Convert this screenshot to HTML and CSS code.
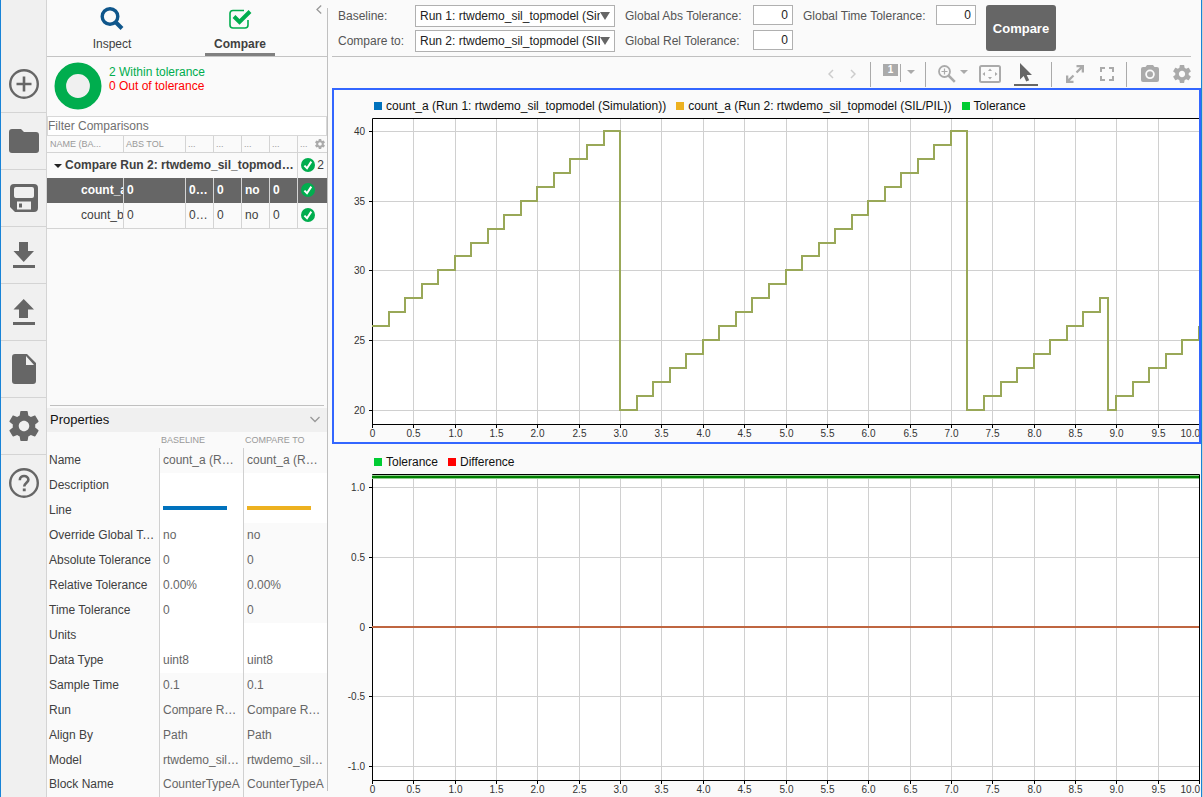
FILE: index.html
```html
<!DOCTYPE html>
<html lang="en">
<head>
  <meta charset="UTF-8" />
  <meta name="viewport" content="width=device-width, initial-scale=1.0"/>
  <title>Simulation Data Inspector</title>
  <link rel="stylesheet" href="styles.css">
</head>
<body>

  <svg class="defs" width="0" height="0" aria-hidden="true">
    <symbol id="gear" viewBox="2 2 20 20">
      <path d="M19.43 12.98c.04-.32.07-.64.07-.98s-.03-.66-.07-.98l2.11-1.65c.19-.15.24-.42.12-.64l-2-3.46c-.12-.22-.39-.3-.61-.22l-2.49 1c-.52-.4-1.08-.73-1.69-.98l-.38-2.65C14.46 2.18 14.25 2 14 2h-4c-.25 0-.46.18-.49.42l-.38 2.65c-.61.25-1.17.59-1.69.98l-2.49-1c-.23-.09-.49 0-.61.22l-2 3.46c-.13.22-.07.49.12.64l2.11 1.65c-.04.32-.07.65-.07.98s.03.66.07.98l-2.11 1.65c-.19.15-.24.42-.12.64l2 3.46c.12.22.39.3.61.22l2.49-1c.52.4 1.08.73 1.69.98l.38 2.65c.03.24.24.42.49.42h4c.25 0 .46-.18.49-.42l.38-2.65c.61-.25 1.17-.59 1.69-.98l2.49 1c.23.09.49 0 .61-.22l2-3.46c.12-.22.07-.49-.12-.64l-2.11-1.65zM12 15.5c-1.93 0-3.5-1.57-3.5-3.5s1.57-3.5 3.5-3.5 3.5 1.57 3.5 3.5-1.57 3.5-3.5 3.5z"/>
    </symbol>
    <symbol id="pass" viewBox="0 0 14 14">
      <circle cx="7" cy="7" r="7" fill="#00ad4e"/>
      <path d="M3.4 7.6 6 10.2 10.3 3.6" fill="none" stroke="#fff" stroke-width="2"/>
    </symbol>
  </svg>

  <div class="app">

    <nav class="sidebar">
      <button aria-label="New"><svg width="30" height="30" viewBox="0 0 30 30"><circle cx="15" cy="15" r="13.8" fill="none" stroke="#666" stroke-width="2.4"/><path d="M15 7.5v15M7.5 15h15" stroke="#666" stroke-width="2.6"/></svg></button>
      <button aria-label="Open"><svg width="30" height="24" viewBox="0 0 30 24"><path d="M3 0h9l3 3h12a3 3 0 0 1 3 3v15a3 3 0 0 1-3 3H3a3 3 0 0 1-3-3V3a3 3 0 0 1 3-3z"/></svg></button>
      <button aria-label="Save"><svg width="28" height="28" viewBox="0 0 28 28"><path fill-rule="evenodd" d="M4 0h20a4 4 0 0 1 4 4v20a4 4 0 0 1-4 4H5l-5-5V4a4 4 0 0 1 4-4zM6 3a2 2 0 0 0-2 2v7a2 2 0 0 0 2 2h16a2 2 0 0 0 2-2V5a2 2 0 0 0-2-2zM7 17.500v8h14v-8zM9 19.500h3v4H9z"/></svg></button>
      <button aria-label="Import"><svg width="22" height="26" viewBox="0 0 22 26"><path d="M6 0h9v9h6L10.700 20 .500 9H6zM0 23h22v3H0z"/></svg></button>
      <button aria-label="Export"><svg width="22" height="26" viewBox="0 0 22 26"><path d="M10.700 0 21 10.500h-6V19H6v-8.500H.500zM0 23h22v3H0z"/></svg></button>
      <button aria-label="Report"><svg width="24" height="30" viewBox="0 0 24 30"><path fill-rule="evenodd" d="M3 0h12l9 9v18a3 3 0 0 1-3 3H3a3 3 0 0 1-3-3V3a3 3 0 0 1 3-3zM14 2v9h8z"/></svg></button>
      <button aria-label="Preferences"><svg width="30" height="30"><use href="#gear"/></svg></button>
      <button aria-label="Help"><svg width="30" height="30" viewBox="0 0 30 30"><circle cx="15" cy="15" r="13.8" fill="none" stroke="#666" stroke-width="2.4"/><path d="M10.800 12.200c0-5.600 8.600-5.300 8.600-.5 0 2.800-4.200 3.300-4.200 6.800" fill="none" stroke="#666" stroke-width="2.6"/><path d="M13.800 20.400h2.900v2.800h-2.900z"/></svg></button>
    </nav>

    <section class="panel">
      <div class="tabs">
        <button class="tab">
          <svg width="24" height="24" viewBox="0 0 24 24"><circle cx="10" cy="9.500" r="7.800" fill="none" stroke="#0f568b" stroke-width="3.400"/><path d="M15.500 15 22 21.500" stroke="#0f568b" stroke-width="4"/></svg>
          Inspect
        </button>
        <button class="tab active">
          <svg width="24" height="24" viewBox="0 0 24 24"><path d="M16 3.500H5a3 3 0 0 0-3 3V18a3 3 0 0 0 3 3h12a3 3 0 0 0 3-3v-5" fill="none" stroke="#00ad4e" stroke-width="1.600"/><path d="M6 9.500 11.500 15 22 4.500" fill="none" stroke="#00ad4e" stroke-width="4"/></svg>
          Compare
        </button>
        <button class="collapse" aria-label="Collapse"><svg width="6" height="9" viewBox="0 0 6 9"><path d="M5.200.500 1 4.500l4.200 4" fill="none" stroke="#999" stroke-width="1.300"/></svg></button>
      </div>

      <div class="summary">
        <svg width="48" height="48" viewBox="0 0 48 48"><circle cx="24" cy="24" r="17.700" fill="#f0f0f0" stroke="#00ad4e" stroke-width="11.600"/></svg>
        <div>
          <div class="within">2 Within tolerance</div>
          <div class="out">0 Out of tolerance</div>
        </div>
      </div>

      <input class="filter" type="text" placeholder="Filter Comparisons" aria-label="Filter Comparisons" />

      <div class="results">
        <table class="comparisons">
          <colgroup><col class="c-name"><col class="c-abs"><col class="c-s"><col class="c-s"><col class="c-s"><col class="c-s"><col></colgroup>
          <tr class="head">
            <th>NAME (BA...</th><th>ABS TOL</th><th>...</th><th>...</th><th>...</th><th>...</th>
            <th class="last"><div class="split">...<svg width="10" height="10" fill="#aaa"><use href="#gear"/></svg></div></th>
          </tr>
          <tr class="group">
            <td colspan="6"><div class="group-name"><i class="arrow"></i><span>Compare Run 2: rtwdemo_sil_topmodel (SIL/PIL)</span></div></td>
            <td class="last"><div class="split"><svg width="14" height="14"><use href="#pass"/></svg>2</div></td>
          </tr>
          <tr class="selected">
            <td class="signal">count_a</td><td>0</td><td>0…</td><td>0</td><td>no</td><td>0</td>
            <td class="last"><svg width="14" height="14"><use href="#pass"/></svg></td>
          </tr>
          <tr class="bottom">
            <td class="signal">count_b</td><td>0</td><td>0…</td><td>0</td><td>no</td><td>0</td>
            <td class="last"><svg width="14" height="14"><use href="#pass"/></svg></td>
          </tr>
        </table>
      </div>

      <div class="properties">
        <div class="prop-title">Properties<svg width="10" height="7" viewBox="0 0 10 7"><path d="M.500 1 5 5.500 9.500 1" fill="none" stroke="#999" stroke-width="1.300"/></svg></div>
        <table class="props">
          <colgroup><col class="p-name"><col class="p-base"><col></colgroup>
          <tr><th></th><th>BASELINE</th><th>COMPARE TO</th></tr>
          <tr><td>Name</td><td>count_a (Run 1: rtwdemo_sil_topmodel)</td><td>count_a (Run 2: rtwdemo_sil_topmodel)</td></tr>
          <tr><td>Description</td><td class="edit"></td><td class="edit"></td></tr>
          <tr><td>Line</td><td class="edit"><span class="line blue"></span></td><td class="edit"><span class="line yellow"></span></td></tr>
          <tr><td>Override Global Tolerance</td><td class="edit">no</td><td>no</td></tr>
          <tr><td>Absolute Tolerance</td><td class="edit">0</td><td>0</td></tr>
          <tr><td>Relative Tolerance</td><td class="edit">0.00%</td><td>0.00%</td></tr>
          <tr><td>Time Tolerance</td><td class="edit">0</td><td>0</td></tr>
          <tr><td>Units</td><td class="edit"></td><td class="edit"></td></tr>
          <tr><td>Data Type</td><td class="edit">uint8</td><td class="edit">uint8</td></tr>
          <tr><td>Sample Time</td><td>0.1</td><td>0.1</td></tr>
          <tr><td>Run</td><td>Compare Run 1</td><td>Compare Run 2</td></tr>
          <tr><td>Align By</td><td>Path</td><td>Path</td></tr>
          <tr><td>Model</td><td>rtwdemo_sil_topmodel</td><td>rtwdemo_sil_topmodel</td></tr>
          <tr><td>Block Name</td><td>CounterTypeA</td><td>CounterTypeA</td></tr>
        </table>
      </div>
    </section>

    <div class="divider"></div>

    <main class="main">
      <form class="settings" onsubmit="return false">
        <label for="baseline">Baseline:</label>
        <div class="select"><select id="baseline"><option>Run 1: rtwdemo_sil_topmodel (Simulation)</option></select></div>
        <label for="absTol">Global Abs Tolerance:</label>
        <input id="absTol" type="text" value="0" />
        <label for="timeTol">Global Time Tolerance:</label>
        <input id="timeTol" type="text" value="0" />
        <button class="compare">Compare</button>
        <label for="compareTo">Compare to:</label>
        <div class="select"><select id="compareTo"><option>Run 2: rtwdemo_sil_topmodel (SIL/PIL)</option></select></div>
        <label for="relTol">Global Rel Tolerance:</label>
        <input id="relTol" type="text" value="0" />
      </form>

      <div class="toolbar">
        <div class="nav">
          <button aria-label="Previous"><svg width="6" height="10" viewBox="0 0 6 10"><path d="M5 1 1 5l4 4" fill="none" stroke="#ccc" stroke-width="1.500"/></svg></button>
          <button aria-label="Next"><svg width="6" height="10" viewBox="0 0 6 10"><path d="m1 1 4 4-4 4" fill="none" stroke="#ccc" stroke-width="1.500"/></svg></button>
        </div>
        <i class="sep"></i>
        <button class="layout" aria-label="Layout"><span class="pages">1</span><i class="bar"></i><i class="caret"></i></button>
        <i class="sep"></i>
        <div class="tools">
          <button class="zoom" aria-label="Zoom"><svg width="18" height="18" viewBox="0 0 18 18"><circle cx="6.500" cy="6.500" r="5.500" fill="none" stroke="#aaa" stroke-width="1.800"/><path d="M6.500 3.500v6M3.500 6.500h6" stroke="#aaa" stroke-width="1.200"/><path d="m10.500 10.500 6.300 6.300" stroke="#aaa" stroke-width="2.500"/></svg><i class="caret"></i></button>
          <button class="tool" aria-label="Fit to view"><svg width="22" height="18" viewBox="0 0 22 18"><rect x="1" y="1" width="20" height="16" rx="1.500" fill="none" stroke="#aaa" stroke-width="2"/><path d="M11 3.500 13 6H9zM11 14.500 9 12h4zM3.500 9 6 7v4zM18.500 9 16 11V7z"/></svg></button>
          <button class="tool current" aria-label="Select"><svg width="14" height="19" viewBox="0 0 14 19"><path fill="#666" d="M1 0v16.500l3.700-3.500 2.500 5.500 3-1.300L7.700 12H13z"/></svg></button>
        </div>
        <i class="sep"></i>
        <button aria-label="Expand"><svg width="18" height="18" viewBox="0 0 18 18"><path d="M10.500 0H18v7.500h-2.300V3.900l-4.400 4.400-1.600-1.600 4.400-4.400h-3.600zM0 10.500h2.300v3.600l4.400-4.400 1.600 1.600-4.400 4.400h3.600V18H0z"/></svg></button>
        <button aria-label="Full screen"><svg width="14" height="14" viewBox="0 0 14 14"><path d="M0 5V0h5v2H2v3zM9 0h5v5h-2V2H9zM0 9h2v3h3v2H0zM12 9h2v5H9v-2h3z"/></svg></button>
        <i class="sep"></i>
        <button aria-label="Snapshot"><svg width="18" height="17" viewBox="0 0 18 17"><path fill-rule="evenodd" d="M6 0h6l1.500 2H16a2 2 0 0 1 2 2v11a2 2 0 0 1-2 2H2a2 2 0 0 1-2-2V4a2 2 0 0 1 2-2h2.500zM9 4.500a4.800 4.800 0 1 0 0 9.600 4.800 4.800 0 1 0 0-9.600z"/><circle cx="9" cy="9.300" r="3"/></svg></button>
        <button aria-label="Plot settings"><svg width="18" height="18"><use href="#gear"/></svg></button>
      </div>

      <div class="plots">
        <div class="plot focused">
          <div class="legend">
            <span><i class="blue"></i>count_a (Run 1: rtwdemo_sil_topmodel (Simulation))</span>
            <span><i class="yellow"></i>count_a (Run 2: rtwdemo_sil_topmodel (SIL/PIL))</span>
            <span><i class="green"></i>Tolerance</span>
          </div>
          <svg id="signals" class="chart"></svg>
        </div>
        <div class="plot">
          <div class="legend">
            <span><i class="green"></i>Tolerance</span>
            <span><i class="red"></i>Difference</span>
          </div>
          <svg id="difference" class="chart"></svg>
        </div>
      </div>
    </main>
  </div>

  <script src="script.js"></script>
</body>
</html>
```
FILE: styles.css
```css
* { box-sizing: border-box; }

body {
  margin: 0;
  height: 100vh;
  padding-right: 1px;
  background: #d0d0d0;
  font-family: "Liberation Sans", Arial, sans-serif;
  font-size: 12px;
  color: #404040;
  overflow: hidden;
}

.defs { position: absolute; }

button, input, select {
  font-family: inherit;
  font-size: 12px;
  color: inherit;
}

button {
  border: none;
  padding: 0;
  background: none;
  cursor: pointer;
}

svg { display: block; flex: none; }

.app {
  display: flex;
  height: 100%;
  background: #fafafa;
  border-left: 1px solid #1883d7;
  border-right: 1px solid #1883d7;
}

/* left icon strip */
.sidebar {
  display: flex;
  flex-direction: column;
  flex: none;
  width: 46px;
  padding-top: 56px;
  background: #f0f0f0;
  border-right: 1px solid #d4d4d4;
  fill: #666;
}

.sidebar button {
  display: flex;
  align-items: center;
  justify-content: center;
  height: 57px;
  padding-bottom: 1px;
  border-bottom: 1px solid #d4d4d4;
}

.sidebar button:last-child { border-bottom-color: transparent; }

/* comparison panel */
.panel {
  display: flex;
  flex-direction: column;
  flex: none;
  width: 280px;
}

.tabs {
  display: flex;
  flex: none;
  height: 57px;
  padding-left: 1px;
  border-bottom: 1px solid #c4c4c4;
}

.tab {
  display: flex;
  flex-direction: column;
  align-items: center;
  gap: 6px;
  width: 70px;
  margin: 0 29px;
  padding-top: 7px;
}

.tab.active {
  font-weight: bold;
  border-bottom: 3px solid #808080;
}

.collapse {
  align-self: flex-start;
  margin-left: auto;
  padding: 5px 5px 5px 0;
}

.summary {
  display: flex;
  flex: none;
  gap: 7px;
  height: 59px;
  padding: 5px 7px;
  line-height: 14px;
}

.summary > div { padding-top: 3px; }
.within { color: #00ad4e; }
.out { color: #f00; }

.filter {
  flex: none;
  width: 100%;
  height: 20px;
  padding: 0;
  border: 1px solid #d8d8d8;
  background: #fff;
}

.filter::placeholder { color: #707070; }

.results { flex: 1; overflow: hidden; }

table {
  width: 100%;
  table-layout: fixed;
  border-collapse: separate;
  border-spacing: 0;
}

th {
  font-size: 9px;
  font-weight: normal;
  text-align: left;
  color: #999;
}

th, td {
  padding: 0 3px;
  white-space: nowrap;
  overflow: hidden;
}

td { padding-bottom: 2px; }

.c-name { width: 77px; }
.c-abs { width: 62px; }
.c-s { width: 28px; }

.comparisons th, .comparisons td { border-right: 1px solid #d4d4d4; }
.comparisons .last { border-right: none; }
.comparisons th { height: 17px; padding: 0 2px; border-bottom: 1px solid #d4d4d4; }
.comparisons th:first-child { padding-left: 3px; }
.comparisons td { height: 25px; }
.comparisons .bottom td { height: 26px; border-bottom: 1px solid #d4d4d4; }
.comparisons .signal { padding-left: 34px; padding-right: 0; }

.group { font-weight: bold; }
.group .last { font-weight: normal; }

.group-name {
  display: flex;
  align-items: center;
  gap: 3px;
  padding-left: 4px;
}

.group-name span {
  overflow: hidden;
  text-overflow: ellipsis;
}

.arrow {
  flex: none;
  margin-top: 2px;
  border: 4px solid transparent;
  border-top-color: #222;
  border-bottom: none;
}

.split {
  display: flex;
  align-items: center;
  justify-content: space-between;
}

.selected {
  background: #666;
  color: #fff;
  font-weight: bold;
}

/* property table */
.properties { flex: none; }

.properties::before {
  content: "";
  display: block;
  height: 1px;
  margin: 0 3px 2px 3px;
  background: #c0c0c0;
}

.prop-title {
  display: flex;
  align-items: center;
  justify-content: space-between;
  height: 24px;
  padding: 0 7px 2px 3px;
  background: #f0f0f0;
  color: #111;
  font-size: 13px;
}

.p-name { width: 112px; }
.p-base { width: 84px; }

.props th { height: 16px; padding: 0 2px; }

.props td {
  height: 25px;
  color: #666;
  border-left: 1px solid #d0d0d0;
  text-overflow: ellipsis;
}

.props td:first-child {
  padding-left: 2px;
  color: #404040;
  border-left: none;
}

.props tr:last-child td { height: 24px; }
.props .edit { background: #fff; }

.line {
  display: block;
  width: 64px;
  height: 4px;
  margin-bottom: 4px;
}

.blue { background: #0072bd; }
.yellow { background: #edb120; }
.green { background: #00cc33; }
.red { background: #f00; }

.divider {
  flex: none;
  width: 1px;
  margin: 8px 4px 6px 0;
  background: #c0c0c0;
}

/* right side */
.main {
  display: flex;
  flex-direction: column;
  flex: 1;
  min-width: 0;
}

.settings {
  display: grid;
  grid-template-columns: 77px 200px 10px 128px 40px 10px 133px 40px 10px 70px;
  grid-template-rows: 22px 22px;
  row-gap: 3px;
  height: 57px;
  margin-right: 10px;
  padding: 5px 0 0 6px;
  border-bottom: 1px solid #c0c0c0;
  color: #555;
}

.settings label { line-height: 22px; white-space: nowrap; }
.settings label[for="baseline"] { grid-area: 1 / 1; }
.settings label[for="compareTo"] { grid-area: 2 / 1; }
.settings label[for="absTol"] { grid-area: 1 / 4; }
.settings label[for="relTol"] { grid-area: 2 / 4; }
.settings label[for="timeTol"] { grid-area: 1 / 7; }
#absTol { grid-area: 1 / 5; }
#relTol { grid-area: 2 / 5; }
#timeTol { grid-area: 1 / 8; }

.settings input {
  width: 40px;
  height: 20px;
  padding: 0 4px;
  border: 1px solid #b0b0b0;
  background: #fff;
  color: #222;
  text-align: right;
}

.select {
  position: relative;
  grid-column: 2;
}

.select select {
  width: 100%;
  height: 22px;
  padding: 0 14px 0 4px;
  appearance: none;
  border: 1px solid #b0b0b0;
  border-radius: 0;
  background: #fff;
  color: #222;
}

.select::after {
  content: "";
  position: absolute;
  top: 7px;
  right: 5px;
  border: 5px solid transparent;
  border-top: 8px solid #666;
  border-bottom: none;
  pointer-events: none;
}

.compare {
  grid-area: 1 / 10 / 3 / 11;
  height: 46px;
  border-radius: 3px;
  background: #666;
  color: #fff;
  font-size: 13px;
  font-weight: bold;
}

.toolbar {
  display: flex;
  flex: none;
  justify-content: flex-end;
  height: 31px;
  padding-right: 3px;
  fill: #aaa;
}

.toolbar button {
  display: flex;
  align-items: center;
  justify-content: center;
  width: 32px;
  height: 31px;
  padding-top: 2px;
}

.sep {
  width: 1px;
  height: 25px;
  margin: 5px 7px 0 3px;
  background: #aaa;
}

.nav { display: flex; padding-right: 3px; }
.toolbar .nav button { width: 22px; }

.toolbar .layout {
  align-items: flex-start;
  justify-content: flex-start;
  gap: 2px;
  width: 34px;
  margin: 0 6px 0 4px;
  padding: 7px 0 0 1px;
}

.pages {
  width: 15px;
  height: 12px;
  background: #aaa;
  color: #fff;
  font-size: 10px;
  font-weight: bold;
  line-height: 12px;
}

.bar {
  width: 1px;
  height: 18px;
  background: #aaa;
}

.caret {
  border: 4px solid transparent;
  border-top-color: #aaa;
  border-bottom: none;
}

.layout .caret { margin: 6px 0 0 4px; }

.tools {
  display: flex;
  gap: 10px;
  padding: 0 10px 0 5px;
}

.toolbar .zoom { width: 30px; gap: 4px; }
.zoom .caret { margin-bottom: 3px; }
.toolbar .tool { width: 24px; }

.toolbar .current {
  height: 29px;
  margin-left: 2px;
  padding-top: 4px;
  border-bottom: 2px solid #666;
}

/* lower time axis runs off the bottom of the window */
.plots {
  display: grid;
  grid-template-rows: 1fr 1fr;
  flex: 1;
  margin-bottom: -3px;
  min-height: 0;
}

.plot {
  display: flex;
  flex-direction: column;
  min-height: 0;
  border: 2px solid transparent;
}

.focused {
  border-color: #3366ff;
  overflow: hidden;
}

.legend {
  display: flex;
  flex: none;
  gap: 10px;
  height: 26px;
  padding: 5px 0 0 40px;
  color: #111;
}

.legend span {
  display: flex;
  align-items: center;
  gap: 4px;
  white-space: nowrap;
}

.legend i { width: 8px; height: 8px; }

.chart {
  flex: 1;
  width: 100%;
  min-height: 0;
  overflow: visible;
}

.chart text {
  font-size: 10px;
  fill: #333;
}

.grid { stroke: #d0d0d0; }
.axis { stroke: #000; fill: none; }
.area { fill: #fff; }

.series { fill: none; stroke-width: 2; }
.count { stroke: #99a858; }
.series.tol-edge { stroke: #8fcf8f; stroke-width: 4; }
.tol { stroke: #008000; }
.diff { stroke: #bf6540; }
```
FILE: script.js
```js
const NS = 'http://www.w3.org/2000/svg';

function add(svg, tag, attrs, text) {
  const el = document.createElementNS(NS, tag);
  for (const k in attrs) el.setAttribute(k, attrs[k]);
  if (text !== undefined) el.textContent = text;
  svg.appendChild(el);
}

// counter signal: +1 every 0.2s, back to 20 on overflow or reset
function counter() {
  const pts = [];
  for (let i = 0; i < 15; i++) pts.push([i * 0.2, 26 + i]);
  for (let i = 0; i < 21; i++) pts.push([3 + i * 0.2, 20 + i]);
  for (let i = 0; i < 9; i++) pts.push([7.2 + i * 0.2, 20 + i]);
  pts.push([8.9, 20]);
  for (let i = 0; i < 6; i++) pts.push([9 + i * 0.2, 21 + i]);
  return pts;
}

function drawChart(id, opts) {
  const svg = document.getElementById(id);
  const box = svg.getBoundingClientRect();
  const left = 38, top = 2, right = Math.round(box.width), bottom = Math.round(box.height) - 18;
  const x = t => left + Math.round(t / 10 * (right - left));
  const y = v => top + Math.round((opts.max - v) / (opts.max - opts.min) * (bottom - top));

  svg.innerHTML = '';
  add(svg, 'rect', { class: 'area', x: left, y: top, width: right - left, height: bottom - top });

  for (let i = 0; i <= 20; i++) {
    const t = i / 2, px = x(t) + 0.5;
    if (i > 0 && i < 20) add(svg, 'path', { class: 'grid', d: `M${px} ${top}V${bottom}` });
    add(svg, 'path', { class: 'axis', d: `M${px} ${bottom}v4` });
    const last = i === 20;
    add(svg, 'text', { x: last ? right + 1 : px, y: bottom + 13, 'text-anchor': last ? 'end' : 'middle' }, i ? t.toFixed(1) : '0');
  }
  opts.ticks.forEach(([v, label]) => {
    const py = y(v) + 0.5;
    add(svg, 'path', { class: 'grid', d: `M${left} ${py}H${right}` });
    add(svg, 'path', { class: 'axis', d: `M${left - 3} ${py}h3` });
    add(svg, 'text', { x: left - 7, y: py + 3, 'text-anchor': 'end' }, label);
  });
  add(svg, 'path', { class: 'axis', d: `M${left + 0.5} ${top + 0.5}H${right + 0.5}V${bottom + 0.5}H${left + 0.5}z` });

  opts.series.forEach(s => {
    let d = '';
    s.points.forEach(([t, v], i) => {
      d += i ? `H${x(t)}V${y(v)}` : `M${x(t)} ${y(v)}`;
    });
    if (s.flat) d += `H${right}`;
    add(svg, 'path', { class: 'series ' + s.name, d });
  });
}

function draw() {
  drawChart('signals', {
    min: 18.99, max: 40.93,
    ticks: [[20, '20'], [25, '25'], [30, '30'], [35, '35'], [40, '40']],
    series: [{ name: 'count', points: counter() }]
  });
  drawChart('difference', {
    min: -1.1, max: 1.094,
    ticks: [[-1, '-1.0'], [-0.5, '-0.5'], [0, '0'], [0.5, '0.5'], [1, '1.0']],
    series: [
      { name: 'tol-edge', points: [[0, 1.073]], flat: true },
      { name: 'tol', points: [[0, 1.073]], flat: true },
      { name: 'diff', points: [[0, 0]], flat: true }
    ]
  });
}

draw();
window.addEventListener('resize', draw);
```
